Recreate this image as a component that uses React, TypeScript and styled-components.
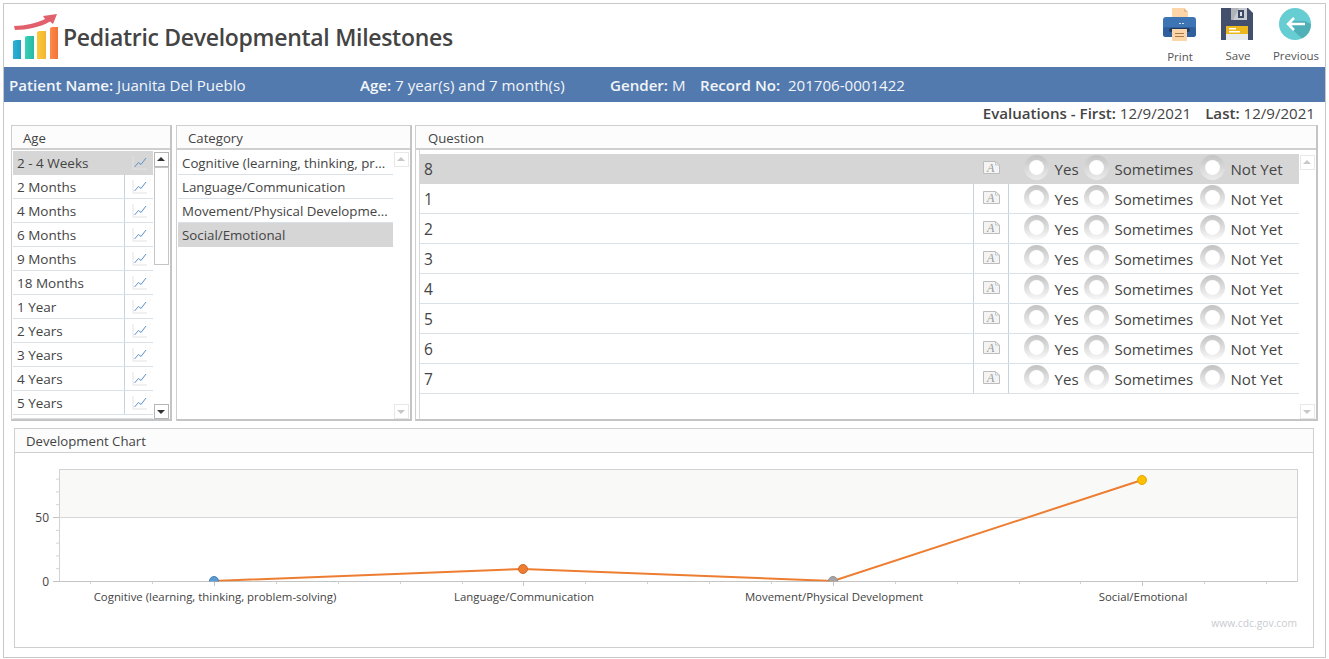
import React from "react";
import styled, { createGlobalStyle } from "styled-components";

const Global = createGlobalStyle`
  html, body { margin: 0; padding: 0; background: #fff; }
  body { font-family: "Open Sans", "Noto Sans", "Liberation Sans", sans-serif; color: #444; }
  * { box-sizing: border-box; }
`;

const Frame = styled.div`
  margin: 3px 0 0 3px;
  width: 1323px;
  height: 655px;
  border: 1px solid #c8c8c8;
  display: flex;
  flex-direction: column;
`;
const Header = styled.header`
  height: 63px;
  display: flex;
  align-items: flex-start;
  justify-content: space-between;
`;
const Brand = styled.div`
  display: flex;
  align-items: center;
  padding: 8px 0 0 9px;
  gap: 4px;
  svg { margin-top: -1px; }
`;
const Title = styled.h1`
  margin: 0;
  font-size: 23px;
  line-height: 50px;
  font-weight: 600;
  color: #444;
  letter-spacing: -0.3px;
  white-space: nowrap;
`;
const Tools = styled.div`
  display: flex;
  padding-top: 3px;
`;
const Tool = styled.div`
  width: 58px;
  display: flex;
  flex-direction: column;
  align-items: center;
  font-size: 11.5px;
  line-height: 16px;
  color: #555;
  gap: 8px;
  svg { display: block; margin: 1px 2px 0 0; }
`;
const PatientBar = styled.div`
  height: 35px;
  background: #527aae;
  color: #f2f5f9;
  font-size: 15.1px;
  display: flex;
  align-items: center;
  padding-left: 5px;
  white-space: nowrap;
  b { font-weight: 600; }
`;
const Info = styled.div<{ $w: number }>`
  width: ${(p) => p.$w}px;
`;
const EvalRow = styled.div`
  height: 23px;
  font-size: 15.1px;
  line-height: 22px;
  text-align: right;
  padding-right: 10px;
  color: #444;
  b { font-weight: 600; margin-left: 10px; }
`;
const Panels = styled.div`
  display: flex;
  padding-left: 7px;
  height: 296px;
`;
const Panel = styled.section<{ $w: number; $ml?: number }>`
  width: ${(p) => p.$w}px;
  margin-left: ${(p) => p.$ml ?? 0}px;
  border: 1px solid #cfcfcf;
  border-bottom: 2px solid #c4c4c4;
  border-right: 2px solid #c4c4c4;
  display: flex;
  flex-direction: column;
  overflow: hidden;
`;
const PanelHead = styled.div<{ $pl?: number }>`
  height: 24px;
  flex: none;
  background: #fcfcfc;
  border-bottom: 2px solid #cfcfcf;
  font-size: 13.2px;
  line-height: 24px;
  padding-left: ${(p) => p.$pl ?? 11}px;
  color: #444;
`;
const PanelBody = styled.div<{ $inset?: boolean }>`
  flex: 1;
  display: flex;
  min-height: 0;
  padding: ${(p) => (p.$inset ? "4px 0 0 0" : "1px 0 0 1px")};
  margin-left: ${(p) => (p.$inset ? "3px" : "0")};
  border-left: ${(p) => (p.$inset ? "1px solid #d8d8d8" : "none")};
  overflow: hidden;
`;
const List = styled.div<{ $w: number }>`
  width: ${(p) => p.$w}px;
  flex: none;
`;
const Row = styled.div<{ $sel?: boolean; $h: number }>`
  height: ${(p) => p.$h}px;
  background: ${(p) => (p.$sel ? "#d6d6d6" : "transparent")};
  border-bottom: 1px solid ${(p) => (p.$sel ? "#d6d6d6" : "#d9e1e8")};
  display: flex;
  align-items: center;
  color: #444;
`;
const AgeLabel = styled.div`
  width: 111px;
  padding-left: 4px;
  font-size: 13.5px;
  white-space: nowrap;
  align-self: stretch;
  display: flex;
  align-items: center;
`;
const AgeChart = styled.div<{ $sel?: boolean }>`
  flex: 1;
  align-self: stretch;
  display: flex;
  align-items: center;
  justify-content: flex-end;
  padding-right: 5px;
  border-left: 1px solid ${(p) => (p.$sel ? "transparent" : "#c6d4e2")};
`;
const CatLabel = styled.div`
  padding-left: 4px;
  font-size: 13.3px;
  white-space: nowrap;
`;
const Scroll = styled.div<{ $w: number; $top?: number }>`
  width: ${(p) => p.$w}px;
  flex: none;
  margin-left: 1px;
  margin-top: ${(p) => p.$top ?? 0}px;
  padding-top: 1px;
  display: flex;
  flex-direction: column;
  align-items: flex-start;
`;
const ScrollBtn = styled.div<{ $off?: boolean }>`
  width: 15px;
  height: 15px;
  flex: none;
  border: 1px solid ${(p) => (p.$off ? "#e8e8e8" : "#b5b5b5")};
  background: #fff;
  position: relative;
  &::after {
    content: "";
    position: absolute;
    left: 2px;
    top: 4px;
    border-left: 4px solid transparent;
    border-right: 4px solid transparent;
  }
`;
const ScrollUp = styled(ScrollBtn)`
  &::after { border-bottom: 4px solid ${(p) => (p.$off ? "#c8c8c8" : "#333")}; }
`;
const ScrollDown = styled(ScrollBtn)`
  &::after { border-top: 4px solid ${(p) => (p.$off ? "#c8c8c8" : "#333")}; top: 5px; }
`;
const Thumb = styled.div<{ $h: number }>`
  width: 15px;
  height: ${(p) => p.$h}px;
  flex: none;
  border: 1px solid #c4c4c4;
  background: #fff;
`;
const Spacer = styled.div`
  flex: 1;
`;
const QNum = styled.div`
  width: 553px;
  padding-left: 4px;
  font-size: 15.5px;
`;
const QNote = styled.div<{ $sel?: boolean }>`
  width: 36px;
  align-self: stretch;
  display: flex;
  align-items: center;
  justify-content: center;
  border-left: 1px solid ${(p) => (p.$sel ? "transparent" : "#c6d4e2")};
  border-right: 1px solid ${(p) => (p.$sel ? "transparent" : "#c6d4e2")};
  svg { margin-top: -2px; }
`;
const Options = styled.div`
  display: flex;
  align-items: center;
  padding-left: 15px;
`;
const Option = styled.label<{ $w: number }>`
  width: ${(p) => p.$w}px;
  display: flex;
  align-items: center;
  gap: 5.5px;
  font-size: 15.1px;
  color: #444;
  white-space: nowrap;
`;
const Radio = styled.span<{ $sel?: boolean }>`
  width: 25px;
  height: 25px;
  flex: none;
  border-radius: 50%;
  margin-top: -3px;
  background: linear-gradient(${(p) => (p.$sel ? "#c4c4c4, #ebebeb" : "#c2c2c2, #f9f9f9")});
  display: flex;
  align-items: center;
  justify-content: center;
  &::after {
    content: "";
    width: 15px;
    height: 15px;
    border-radius: 50%;
    background: radial-gradient(circle, #fff 60%, #f6f6f6 85%, #ececec 100%);
  }
`;
const ChartPanel = styled.section`
  margin: 7px 0 0 10px;
  width: 1300px;
  height: 220px;
  border: 1px solid #cfcfcf;
  display: flex;
  flex-direction: column;
`;
const ChartHead = styled.div`
  height: 24px;
  flex: none;
  background: #fcfcfc;
  border-bottom: 1px solid #cfcfcf;
  font-size: 13.2px;
  line-height: 24px;
  padding-left: 11px;
`;
const ChartWrap = styled.div`
  flex: 1;
  svg { display: block; }
  text { font-family: "Open Sans", "Noto Sans", sans-serif; }
`;

const Logo = () => (
  <svg width="46" height="46" viewBox="0 0 46 46">
    <defs>
      <linearGradient id="b1" x1="0" x2="1"><stop offset="0" stopColor="#2bb2d6" /><stop offset="1" stopColor="#1f9fc4" /></linearGradient>
      <linearGradient id="b2" x1="0" x2="1"><stop offset="0" stopColor="#3ad0b8" /><stop offset="1" stopColor="#26b9a4" /></linearGradient>
      <linearGradient id="b3" x1="0" x2="1"><stop offset="0" stopColor="#fbcb3c" /><stop offset="1" stopColor="#f2b430" /></linearGradient>
      <linearGradient id="b4" x1="0" x2="1"><stop offset="0" stopColor="#fb8b4c" /><stop offset="1" stopColor="#f57238" /></linearGradient>
    </defs>
    <path d="M1 12C12 12 24 9 32 5L30 2L44 0L40 10L37 7.500C28 13 14 16 2 16Z" fill="#e0606c" />
    <path d="M0 45V27l3-1h5v19z" fill="url(#b1)" />
    <path d="M12 45V23l2-1h7v23z" fill="url(#b2)" />
    <path d="M24 45V18l2-1h7v28z" fill="url(#b3)" />
    <path d="M37 45V14l2-1h6v32z" fill="url(#b4)" />
  </svg>
);
const PrintIcon = () => (
  <svg width="33" height="33" viewBox="0 0 33 33">
    <path d="M9 0h12l4 4v9H9z" fill="#fcd6a8" />
    <path d="M21 0l4 4h-4z" fill="#e8bd8c" />
    <path d="M3 9h27a3 3 0 0 1 3 3v14a3 3 0 0 1-3 3H3a3 3 0 0 1-3-3V12a3 3 0 0 1 3-3z" fill="#3d74b4" />
    <rect x="0" y="19" width="33" height="10" rx="3" fill="#2f5f9c" />
    <rect x="6" y="20" width="21" height="4" rx="2" fill="#1f3a5e" />
    <rect x="16" y="15" width="2" height="1" fill="#cfe0f2" />
    <rect x="19" y="15" width="2" height="1" fill="#cfe0f2" />
    <rect x="9" y="21" width="15" height="12" fill="#fcd6a8" />
    <path d="M12 25.500h9M12 28.500h9" stroke="#a8784a" strokeWidth="1" />
  </svg>
);
const SaveIcon = () => (
  <svg width="32" height="32" viewBox="0 0 32 32">
    <path d="M0 0h27l5 5v27H0z" fill="#42506e" />
    <path d="M10 0h16v12H10z" fill="#c9ccd0" />
    <path d="M10 0h8l-6 12H10z" fill="#b0b3b8" />
    <rect x="17" y="2" width="6" height="8" fill="#3d4a66" />
    <rect x="19" y="4" width="2" height="4" fill="#dfe2e6" />
    <rect x="5" y="18" width="22" height="14" fill="#e8ecec" />
    <rect x="5" y="18" width="22" height="8" fill="#ecb81c" />
    <rect x="8" y="20" width="7" height="1.500" fill="#fff" />
    <rect x="8" y="23" width="11" height="1.500" fill="#fff" />
  </svg>
);
const BackIcon = () => (
  <svg width="32" height="32" viewBox="0 0 32 32">
    <circle cx="16" cy="16" r="16" fill="#66cdd3" />
    <path d="M14 22l9 8.500a16 16 0 0 0 9-14.500L26 13H14z" fill="#4fb0b8" />
    <path d="M15 10l-6 6 6 6M9 16h17" fill="none" stroke="#fff" strokeWidth="2.500" />
  </svg>
);
const MiniChart = () => (
  <svg width="16" height="16" viewBox="0 0 16 16">
    <path d="M1 1v13h14" fill="none" stroke="#e3e3e3" strokeWidth="1" />
    <path d="M2.500 12L6.500 7.500 9 9.500 14 3" fill="none" stroke="#5c90c8" strokeWidth="1" />
  </svg>
);
const NoteIcon = () => (
  <svg width="17" height="13" viewBox="0 0 17 13">
    <path d="M.5.500h12l4 3.500v8.500H.5z" fill="#f4f4f4" stroke="#bdbdbd" />
    <path d="M12.500.500v3.500h4" fill="none" stroke="#c8c8c8" />
    <text x="4" y="11" fontSize="12" fontStyle="italic" fontFamily="Liberation Serif, serif" fill="#9a9a9a">A</text>
  </svg>
);

const ages = ["2 - 4 Weeks", "2 Months", "4 Months", "6 Months", "9 Months", "18 Months", "1 Year", "2 Years", "3 Years", "4 Years", "5 Years"];
const cats = ["Cognitive (learning, thinking, pr...", "Language/Communication", "Movement/Physical Developme...", "Social/Emotional"];
const qs = ["8", "1", "2", "3", "4", "5", "6", "7"];
const opts: [string, number][] = [["Yes", 60], ["Sometimes", 116], ["Not Yet", 90]];

const catsX = [214, 523, 833, 1142].map((x) => x - 15);
const plotL = 44;
const plotR = 1282;
const y0 = 128;
const minorX = [90, 152, 276, 338, 400, 462, 585, 647, 709, 771, 895, 957, 1019, 1080, 1204, 1266];

const Chart = () => (
  <svg width="1298" height="194" viewBox="0 0 1298 194">
    <rect x={plotL} y="16" width={plotR - plotL} height="48" fill="#f9f9f7" />
    <rect x={plotL + 0.5} y="16.500" width={plotR - plotL} height={y0 - 16} fill="none" stroke="#d2d2d2" />
    <path d={`M${plotL} 64.500H${plotR}`} stroke="#d8d8d8" />
    <path d={`M${plotL} ${y0 + 0.5}H${plotR}`} stroke="#c4c4c4" />
    {[0, 50].map((v) => (
      <path key={v} d={`M${plotL - 6} ${y0 + 0.5 - v * 1.28}H${plotL}`} stroke="#c4c4c4" />
    ))}
    {[10, 20, 30, 40, 60, 70, 80].map((v) => (
      <path key={v} d={`M${plotL - 3} ${y0 + 0.5 - v * 1.28}H${plotL}`} stroke="#d4d4d4" />
    ))}
    {minorX.map((x) => (
      <path key={x} d={`M${x - 15 + 0.5} ${y0}v3`} stroke="#d0d0d0" />
    ))}
    {catsX.map((x) => (
      <path key={x} d={`M${x + 0.5} ${y0}v5`} stroke="#c4c4c4" />
    ))}
    <text x="34" y="69" fontSize="12" fill="#444" textAnchor="end">50</text>
    <text x="34" y="133" fontSize="12" fill="#444" textAnchor="end">0</text>
    <clipPath id="plotClip"><rect x="0" y="0" width="1298" height={y0 + 0.5} /></clipPath>
    <g clipPath="url(#plotClip)">
      <polyline points={`${catsX[0]},128 ${catsX[1]},116 ${catsX[2]},128 ${catsX[3]},27`} fill="none" stroke="#ed7d31" strokeWidth="2" />
      <circle cx={catsX[0]} cy="128" r="4.500" fill="#5b9bd5" stroke="#4a83b8" />
      <circle cx={catsX[1]} cy="116" r="4.500" fill="#ed7d31" stroke="#d0682a" />
      <circle cx={catsX[2]} cy="128" r="4.500" fill="#a5a5a5" stroke="#8f8f8f" />
      <circle cx={catsX[3]} cy="27" r="4.500" fill="#ffc000" stroke="#e0a800" />
    </g>
    {["Cognitive (learning, thinking, problem-solving)", "Language/Communication", "Movement/Physical Development", "Social/Emotional"].map((t, i) => (
      <text key={t} x={catsX[i] + 1} y="148" fontSize="11.400" fill="#444" textAnchor="middle">{t}</text>
    ))}
    <text x={plotR} y="174" fontSize="10.300" fill="#c8ccd0" textAnchor="end">www.cdc.gov.com</text>
  </svg>
);

export default function App() {
  return (
    <Frame>
      <Global />
      <Header>
        <Brand>
          <Logo />
          <Title>Pediatric Developmental Milestones</Title>
        </Brand>
        <Tools>
          <Tool><PrintIcon />Print</Tool>
          <Tool><SaveIcon />Save</Tool>
          <Tool><BackIcon />Previous</Tool>
        </Tools>
      </Header>
      <PatientBar>
        <Info $w={351}><b>Patient Name:</b> Juanita Del Pueblo</Info>
        <Info $w={250}><b>Age:</b> 7 year(s) and 7 month(s)</Info>
        <Info $w={90}><b>Gender:</b> M</Info>
        <Info $w={300}><b>Record No:</b>&nbsp; 201706-0001422</Info>
      </PatientBar>
      <EvalRow>
        <b>Evaluations - First:</b> 12/9/2021 <b>Last:</b> 12/9/2021
      </EvalRow>
      <Panels>
        <Panel $w={161}>
          <PanelHead>Age</PanelHead>
          <PanelBody>
            <List $w={140}>
              {ages.map((a, i) => (
                <Row key={a} $h={24} $sel={i === 0}>
                  <AgeLabel>{a}</AgeLabel>
                  <AgeChart $sel={i === 0}><MiniChart /></AgeChart>
                </Row>
              ))}
              <Row $h={4} />
            </List>
            <Scroll $w={17}>
              <ScrollUp />
              <Thumb $h={98} />
              <Spacer />
              <ScrollDown />
            </Scroll>
          </PanelBody>
        </Panel>
        <Panel $w={236} $ml={4}>
          <PanelHead>Category</PanelHead>
          <PanelBody>
            <List $w={215}>
              {cats.map((c, i) => (
                <Row key={c} $h={24} $sel={i === 3}><CatLabel>{c}</CatLabel></Row>
              ))}
            </List>
            <Scroll $w={17}>
              <ScrollUp $off />
              <Spacer />
              <ScrollDown $off />
            </Scroll>
          </PanelBody>
        </Panel>
        <Panel $w={903} $ml={3}>
          <PanelHead $pl={12}>Question</PanelHead>
          <PanelBody $inset>
            <List $w={879}>
              {qs.map((q, i) => (
                <Row key={q} $h={30} $sel={i === 0}>
                  <QNum>{q}</QNum>
                  <QNote $sel={i === 0}><NoteIcon /></QNote>
                  <Options>
                    {opts.map(([o, w]) => (
                      <Option key={o} $w={w}><Radio $sel={i === 0} />{o}</Option>
                    ))}
                  </Options>
                </Row>
              ))}
            </List>
            <Scroll $w={18}>
              <ScrollUp $off />
              <Spacer />
              <ScrollDown $off />
            </Scroll>
          </PanelBody>
        </Panel>
      </Panels>
      <ChartPanel>
        <ChartHead>Development Chart</ChartHead>
        <ChartWrap><Chart /></ChartWrap>
      </ChartPanel>
    </Frame>
  );
}
